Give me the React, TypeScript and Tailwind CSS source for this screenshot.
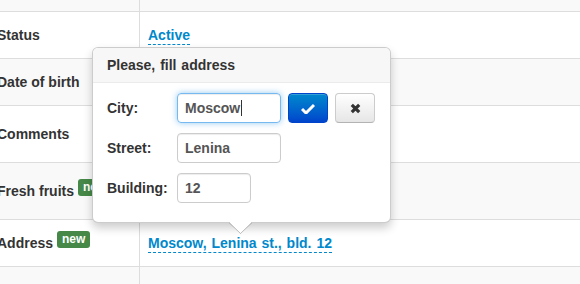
import React from 'react';

type Row = {
  label: string;
  badge?: boolean;
  value?: string;
  height: string;
  striped: boolean;
};

const rows: Row[] = [
  { label: '', height: 'h-[12px]', striped: true },
  { label: 'Status', value: 'Active', height: 'h-[47px]', striped: false },
  { label: 'Date of birth', height: 'h-[47px]', striped: true },
  { label: 'Comments', height: 'h-[57px]', striped: false },
  { label: 'Fresh fruits', badge: true, height: 'h-[57px]', striped: true },
  { label: 'Address', badge: true, value: 'Moscow, Lenina st., bld. 12', height: 'h-[47px]', striped: false },
  { label: '', height: 'h-[30px]', striped: true },
];

function Badge() {
  return (
    <span className="ml-[4px] mb-[8px] h-[17px] px-[5px] rounded-[3px] bg-[#468847] text-white text-[12px] leading-[17px] font-bold">
      new
    </span>
  );
}

function Field({ label, width, value, focused }: { label: string; width: string; value: string; focused?: boolean }) {
  return (
    <div className="flex items-center h-[30px]">
      <div className="w-[70px] text-[14px] font-bold text-[#333] leading-[20px] -mt-[1px]">{label}</div>
      <div
        className={`${width} h-[30px] rounded-[4px] border px-[7px] flex items-center text-[14px] font-bold text-[#555] ${
          focused
            ? 'border-[rgba(82,168,236,0.8)] shadow-[inset_0_1px_1px_rgba(0,0,0,0.075),0_0_6px_rgba(82,168,236,0.6)]'
            : 'border-[#ccc] shadow-[inset_0_1px_1px_rgba(0,0,0,0.075)]'
        }`}
      >
        {value}
        {focused && <span className="ml-[1px] w-[1px] h-[16px] bg-[#333]" />}
      </div>
    </div>
  );
}

function Popover() {
  return (
    <div className="absolute left-[92px] top-[47px] w-[299px] h-[176px] bg-white border border-[rgba(0,0,0,0.2)] rounded-[6px] shadow-[0_5px_10px_rgba(0,0,0,0.2)]">
      <div className="h-[35px] px-[14px] pt-[1px] flex items-center bg-[#f7f7f7] border-b border-[#ebebeb] rounded-t-[5px] text-[14px] font-bold text-[#333] [word-spacing:1px]">
        Please, fill address
      </div>
      <div className="pl-[14px] pt-[10px] flex flex-col gap-[10px]">
        <div className="flex items-center gap-[7px]">
          <Field label="City:" width="w-[104px]" value="Moscow" focused />
          <button className="w-[40px] h-[30px] rounded-[4px] border border-[#0044cc] bg-gradient-to-b from-[#0088cc] to-[#0044cc] flex items-center justify-center shadow-[inset_0_1px_0_rgba(255,255,255,0.2)]">
            <svg width="14" height="11" viewBox="0 0 14 11">
              <path d="M1 6 L5 10 L13 2" fill="none" stroke="white" strokeWidth="3" strokeLinejoin="miter" />
            </svg>
          </button>
          <button className="w-[40px] h-[30px] rounded-[4px] border border-[#ccc] border-b-[#b3b3b3] bg-gradient-to-b from-white to-[#e6e6e6] flex items-center justify-center">
            <svg width="11" height="11" viewBox="0 0 11 11">
              <path d="M1.8 1.8 L9.2 9.2 M9.2 1.8 L1.8 9.2" fill="none" stroke="#333" strokeWidth="3.2" />
            </svg>
          </button>
        </div>
        <Field label="Street:" width="w-[104px]" value="Lenina" />
        <Field label="Building:" width="w-[74px]" value="12" />
      </div>
      <svg className="absolute top-full left-[136px]" width="23" height="12" viewBox="0 0 23 12">
        <polygon points="0,0 11.5,11.5 23,0" fill="white" />
        <polyline points="0,0.5 11.5,11.5 23,0.5" fill="none" stroke="rgba(0,0,0,0.25)" strokeWidth="1" />
      </svg>
    </div>
  );
}

export default function App() {
  return (
    <div className="relative w-[580px] h-[284px] overflow-hidden bg-white font-['Liberation_Sans',Arial,sans-serif]">
      <div className="-ml-[3px] w-[583px]">
        {rows.map((row, i) => (
          <div
            key={i}
            className={`flex ${row.height} border-b border-[#ddd] ${row.striped ? 'bg-[#f9f9f9]' : 'bg-white'}`}
          >
            <div className="w-[143px] border-r border-[#ddd] flex items-center text-[14px] font-bold text-[#333]">
              {row.label}
              {row.badge && <Badge />}
            </div>
            <div className="flex-1 pl-[8px] flex items-center">
              {row.value && (
                <span className="text-[14px] font-bold text-[#0088cc] leading-[17px] border-b border-dashed border-[#0088cc] mt-[2px] [word-spacing:1px]">
                  {row.value}
                </span>
              )}
            </div>
          </div>
        ))}
      </div>
      <Popover />
    </div>
  );
}
